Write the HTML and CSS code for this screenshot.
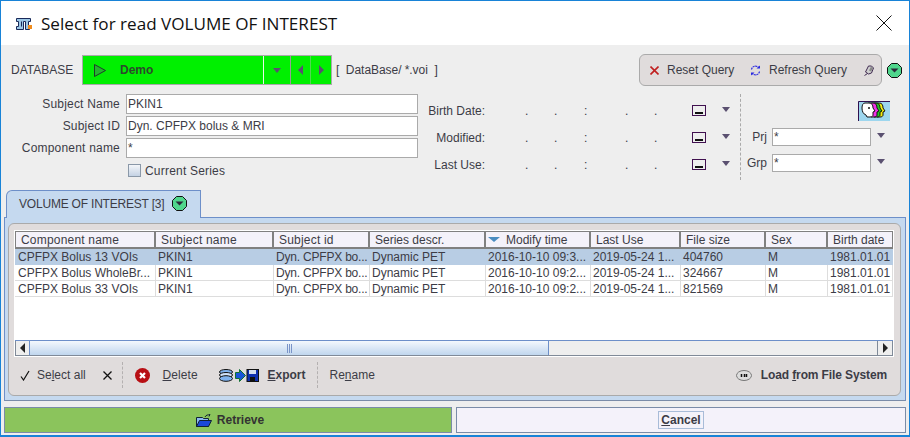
FILE: index.html
```html
<!DOCTYPE html>
<html lang="en">
<head>
<meta charset="utf-8">
<title>Select for read VOLUME OF INTEREST</title>
<link rel="stylesheet" href="styles.css">
</head>
<body>
<div class="window">
  <header class="titlebar">
    <svg class="logo" width="17" height="12" viewBox="0 0 17 12"><path d="M0.500 0.500h14v3h-2v5h1v3h-4v-8h-2v8h-7v-3h2v-5h-2z" fill="#9cc7e6" stroke="#1a2a5a"/><path d="M5.500 3.500v5" stroke="#1a2a5a"/><rect x="12" y="7" width="4" height="4" fill="#f08c1e"/></svg>
    <h1 class="title">Select for read VOLUME OF INTEREST</h1>
    <svg class="close" width="16" height="16" viewBox="0 0 16 16"><path d="M0.500 0.500l15 15M15.500 0.500l-15 15" stroke="#111" fill="none"/></svg>
  </header>

  <section class="dbrow">
    <span class="dblabel">DATABASE</span>
    <div class="dbbar">
      <svg class="play" width="12" height="13" viewBox="0 0 12 13"><path d="M0.500 0.500v12l11-6z" fill="#25b52f" stroke="#1f3d2a"/></svg>
      <b class="dbname">Demo</b>
      <span class="dbdrop"><i class="tri"></i></span>
      <span class="dbnav dbnav-prev"><i class="tri-l"></i></span>
      <span class="dbnav"><i class="tri-r"></i></span>
    </div>
    <span class="dbpath">[&nbsp; DataBase/ *.voi &nbsp;]</span>
    <div class="querypill">
      <svg width="9" height="9" viewBox="0 0 9 9"><path d="M0.500 0.500l8 8M8.500 0.500l-8 8" stroke="#c02020" stroke-width="1.600"/></svg>
      <span class="qreset">Reset Query</span>
      <svg class="qicon2" width="11" height="11" viewBox="0 0 11 11"><path d="M1.500 4.500a4 4 0 0 1 7-2M9.500 6.500a4 4 0 0 1-7 2" fill="none" stroke="#2a2ae0" stroke-width="1.200" stroke-dasharray="2 0.600"/><path d="M6.500 3.500h3.500v-3zM4.500 7.500h-3.500v3z" fill="#2a2ae0"/></svg>
      <span class="qrefresh">Refresh Query</span>
      <svg class="qerase" width="10" height="11" viewBox="0 0 10 11"><path d="M1.500 7l3-6h3l2 2-2 5-3 1z" fill="#cfcfcf" stroke="#402a50"/><path d="M7 1.500l2 2-2 3-2-1z" fill="#888"/><path d="M0.500 10.500l3-2" stroke="#402a50"/></svg>
    </div>
    <svg class="gdot gdot-top" width="15" height="15" viewBox="0 0 15 15"><path d="M4.500 0.500h6l4 4v6l-4 4h-6l-4-4v-6z" fill="#4fd68c" stroke="#111"/><path d="M3.500 5.500h8l-4 4z" fill="#2a2a3a"/></svg>
  </section>

  <section class="form">
    <div class="names">
      <div class="frow"><label class="flabel">Subject Name</label><div class="finput">PKIN1</div></div>
      <div class="frow"><label class="flabel">Subject ID</label><div class="finput">Dyn. CPFPX bolus &amp; MRI</div></div>
      <div class="frow"><label class="flabel">Component name</label><div class="finput">*</div></div>
      <div class="checkrow"><i class="check"></i><span>Current Series</span></div>
    </div>
    <div class="dates">
      <div class="drow"><span class="dlabel">Birth Date:</span><span class="dd d1">.</span><span class="dd d2">.</span><span class="dd d3">:</span><span class="dd d4">.</span><span class="dd d5">.</span><svg class="cal" width="14" height="11" viewBox="0 0 14 11"><rect x="0.500" y="0.500" width="13" height="10" fill="none" stroke="#40104f"/><rect x="3" y="7" width="8" height="2" fill="#111"/></svg><i class="tri tri-date"></i></div>
      <div class="drow"><span class="dlabel">Modified:</span><span class="dd d1">.</span><span class="dd d2">.</span><span class="dd d3">:</span><span class="dd d4">.</span><span class="dd d5">.</span><svg class="cal" width="14" height="11" viewBox="0 0 14 11"><rect x="0.500" y="0.500" width="13" height="10" fill="none" stroke="#40104f"/><rect x="3" y="7" width="8" height="2" fill="#111"/></svg><i class="tri tri-date"></i></div>
      <div class="drow"><span class="dlabel">Last Use:</span><span class="dd d1">.</span><span class="dd d2">.</span><span class="dd d3">:</span><span class="dd d4">.</span><span class="dd d5">.</span><svg class="cal" width="14" height="11" viewBox="0 0 14 11"><rect x="0.500" y="0.500" width="13" height="10" fill="none" stroke="#40104f"/><rect x="3" y="7" width="8" height="2" fill="#111"/></svg><i class="tri tri-date"></i></div>
    </div>
    <div class="side">
      <svg class="faces" width="32" height="20" viewBox="0 0 32 20">
        <defs><path id="face" d="M5 2h4c3 0 4 2 4 5l2 3-2 1v3c0 1-1 2-3 2H7l-1-2c-3-1-4-4-4-7 0-3 1-5 3-5z" stroke="#111"/></defs>
        <rect width="32" height="20" fill="#9dd6ee"/><path d="M0.500 20V0.500H32" fill="none" stroke="#30104f"/>
        <use href="#face" x="12" fill="#f4f010"/><use href="#face" x="9" fill="#22c822"/><use href="#face" x="6" fill="#f030e8"/><use href="#face" x="2" fill="#fff"/>
        <circle cx="11" cy="7" r="1" fill="#111"/>
      </svg>
      <div class="srow"><span class="slabel">Prj</span><div class="finput sinput">*</div><i class="tri tri-side"></i></div>
      <div class="srow srow-grp"><span class="slabel">Grp</span><div class="finput sinput">*</div><i class="tri tri-side"></i></div>
    </div>
  </section>

  <div class="tabstrip">
    <div class="tab"><span class="tabtext">VOLUME OF INTEREST [3]</span>
      <svg class="gdot" width="15" height="15" viewBox="0 0 15 15"><path d="M4.500 0.500h6l4 4v6l-4 4h-6l-4-4v-6z" fill="#4fd68c" stroke="#111"/><path d="M3.500 5.500h8l-4 4z" fill="#2a2a3a"/></svg>
    </div>
  </div>
  <section class="tabpanel">
    <div class="inner">
      <div class="tablewrap">
        <table class="grid">
          <colgroup><col class="c1"><col class="c2"><col class="c3"><col class="c4"><col class="c5"><col class="c6"><col class="c7"><col class="c8"><col class="c9"></colgroup>
          <thead><tr><th>Component name</th><th>Subject name</th><th>Subject id</th><th>Series descr.</th><th class="sorted"><i class="tri-sort"></i>Modify time</th><th>Last Use</th><th>File size</th><th>Sex</th><th>Birth date</th></tr></thead>
          <tbody>
            <tr class="sel"><td>CPFPX Bolus 13 VOIs</td><td>PKIN1</td><td class="tight">Dyn. CPFPX bo...</td><td>Dynamic PET</td><td>2016-10-10 09:3...</td><td>2019-05-24 1...</td><td>404760</td><td>M</td><td>1981.01.01</td></tr>
            <tr><td>CPFPX Bolus WholeBr...</td><td>PKIN1</td><td class="tight">Dyn. CPFPX bo...</td><td>Dynamic PET</td><td>2016-10-10 09:2...</td><td>2019-05-24 1...</td><td>324667</td><td>M</td><td>1981.01.01</td></tr>
            <tr><td>CPFPX Bolus 33 VOIs</td><td>PKIN1</td><td class="tight">Dyn. CPFPX bo...</td><td>Dynamic PET</td><td>2016-10-10 09:2...</td><td>2019-05-24 1...</td><td>821569</td><td>M</td><td>1981.01.01</td></tr>
          </tbody>
        </table>
        <div class="hscroll">
          <span class="sbtn"><i class="tri-l tri-dark"></i></span>
          <div class="thumb"><i class="grip"></i></div>
          <div class="track"></div>
          <span class="sbtn sbtn-r"><i class="tri-r tri-dark"></i></span>
        </div>
      </div>
      <div class="toolbar">
        <svg class="t-check" width="10" height="11" viewBox="0 0 10 11"><path d="M1 6.500l2.500 3.500L9 1" fill="none" stroke="#111" stroke-width="1.200"/></svg>
        <span class="t-select">Se<u>l</u>ect all</span>
        <svg class="t-x" width="9" height="9" viewBox="0 0 9 9"><path d="M0.500 0.500l8 8M8.500 0.500l-8 8" stroke="#111" stroke-width="1.300"/></svg>
        <i class="vsep vsep1"></i>
        <svg class="t-del" width="15" height="15" viewBox="0 0 15 15"><circle cx="7.500" cy="7.500" r="7.500" fill="#b80f14"/><path d="M5 5l5 5M10 5l-5 5" stroke="#fff" stroke-width="2.200"/></svg>
        <span class="t-delete"><u>D</u>elete</span>
        <svg class="t-exp" width="40" height="13" viewBox="0 0 40 13"><ellipse cx="7" cy="3" rx="6.500" ry="2.500" fill="#7fb2ee" stroke="#111"/><ellipse cx="7" cy="6" rx="6.500" ry="2.500" fill="#cfe2fa" stroke="#111"/><ellipse cx="7" cy="9.500" rx="6.500" ry="2.800" fill="#7fb2ee" stroke="#111"/><path d="M16.500 3.500h4v-3l6 6-6 6v-3h-4z" fill="#1a55d8" stroke="#107030"/><rect x="28" y="0.500" width="11.500" height="12" fill="#1030b0" stroke="#111"/><rect x="30" y="1" width="7" height="4" fill="#d8e0f0"/><rect x="31" y="8" width="5" height="4" fill="#111"/></svg>
        <b class="t-export"><u>E</u>xport</b>
        <i class="vsep vsep2"></i>
        <span class="t-rename">Re<u>n</u>ame</span>
        <svg class="t-load" width="16" height="11" viewBox="0 0 16 11"><ellipse cx="8" cy="5.500" rx="7.500" ry="5" fill="#ddd" stroke="#777"/><path d="M5.500 4v3M8.500 4v3M10.500 4v3" stroke="#111" stroke-width="1.500"/></svg>
        <b class="t-loadtext">Load <u>f</u>rom File System</b>
      </div>
    </div>
  </section>

  <footer class="actions">
    <div class="btn-retrieve">
      <svg width="16" height="13" viewBox="0 0 16 13"><path d="M0.500 3.500h6l1 1h5v8h-12z" fill="#8ab8ee" stroke="#123"/><path d="M0.500 12.500l3-6h12l-3 6z" fill="#1a48d8" stroke="#123"/><path d="M9 3c1-2 3-2.500 5-2l-1-0.500M14 0.500l-1 2" fill="none" stroke="#123"/></svg>
      <b>Retrieve</b>
    </div>
    <div class="btn-cancel"><b class="cancel-focus"><u>C</u>ancel</b></div>
  </footer>
</div>
</body>
</html>
```
FILE: styles.css
```css
* { box-sizing: border-box; }
html, body { margin: 0; padding: 0; }
body { width: 910px; height: 437px; overflow: hidden; background: #fff; font-family: "Liberation Sans", Arial, sans-serif; font-size: 12px; color: #3c3c46; }
.window { width: 910px; height: 437px; border: 1px solid #1883d7; border-bottom-width: 2px; background: #eee; display: flex; flex-direction: column; }
svg { display: block; flex: none; }

.titlebar { height: 44px; background: #fff; display: flex; align-items: center; padding: 0 17px 0 15px; flex: none; }
.logo { margin-top: 1px; }
.title { margin: 0 0 0 8px; font: 400 17.100px "Open Sans", sans-serif; color: #111; flex: 1; white-space: nowrap; }
.close { margin-top: -1px; }

.dbrow { height: 32px; margin-top: 9px; padding-left: 10px; display: flex; align-items: center; flex: none; }
.dblabel { width: 71px; }
.dbbar { width: 250px; height: 30px; background: #00f000; border: 1px solid #aaa; display: flex; align-items: center; padding-left: 11px; color: #2c4a2c; }
.dbname { margin-left: 14px; width: 143px; }
.dbdrop { width: 28px; height: 100%; border-left: 1px solid #e8f8e8; border-right: 1px solid #999; display: flex; align-items: center; justify-content: center; }
.dbnav { width: 20px; height: 100%; display: flex; align-items: center; justify-content: center; }
.dbnav-prev { border-right: 1px solid #52d852; }
.tri { display: block; width: 0; height: 0; border: 4.500px solid transparent; border-top: 5px solid #5a5070; border-bottom: 0; flex: none; }
.tri-l { display: block; width: 0; height: 0; border: 5px solid transparent; border-right: 5px solid #5a5070; border-left: 0; }
.tri-r { display: block; width: 0; height: 0; border: 5px solid transparent; border-left: 5px solid #5a5070; border-right: 0; }
.tri-dark { border-right-color: #222; border-left-color: #222; }
.dbpath { margin-left: 4px; width: 303px; letter-spacing: -0.050px; }
.querypill { width: 243px; height: 32px; background: #e0dcdc; border: 1px solid #aaa; border-radius: 6px; display: flex; align-items: center; padding-left: 10px; }
.qreset { margin-left: 8px; width: 83px; }
.qrefresh { margin-left: 8px; width: 91px; }
.qerase { margin-left: 4px; }
.gdot-top { margin-left: 5px; }

.form { height: 96px; margin-top: 8px; display: flex; flex: none; }
.names { width: 417px; }
.frow { display: flex; align-items: center; height: 20px; margin-bottom: 2px; }
.flabel { width: 125px; text-align: right; padding-right: 6px; letter-spacing: 0.200px; }
.finput { background: #fff; border: 1px solid #aaa; height: 20px; line-height: 18px; padding-left: 1px; width: 292px; }
.checkrow { display: flex; align-items: center; margin: 6px 0 0 127px; height: 13px; letter-spacing: 0.200px; }
.check { width: 13px; height: 13px; border: 1px solid #8a98a8; background: linear-gradient(#f4f6f9, #c4d2e4); margin-right: 4px; }

.dates { width: 323px; height: 86px; padding-top: 3px; border-right: 1px dashed #aaa; }
.drow { display: flex; align-items: center; height: 27px; }
.dlabel { width: 67px; text-align: right; }
.dd { display: block; width: 0; }
.d1 { margin-left: 40px; } .d2 { margin-left: 29px; } .d3 { margin-left: 30px; } .d4 { margin-left: 41px; } .d5 { margin-left: 29px; }
.cal { margin-left: 38px; }
.tri-date { margin: -3px 0 0 16px; }

.side { flex: 1; padding-top: 7px; }
.faces { margin-left: 117px; }
.srow { display: flex; align-items: center; height: 18px; margin-top: 7px; }
.srow-grp { margin-top: 8px; }
.slabel { width: 26px; text-align: right; margin-right: 5px; }
.sinput { width: 99px; height: 18px; line-height: 16px; }
.tri-side { margin: -3px 0 0 6px; }

.tabstrip { height: 27px; padding-left: 5px; flex: none; position: relative; z-index: 1; }
.tab { width: 195px; height: 28px; background: #c5d9ef; border: 1px solid #6d8fc9; border-bottom: 0; border-top-left-radius: 6px; display: flex; align-items: center; padding: 0 0 2px 12px; }
.tabtext { letter-spacing: -0.200px; }
.tab .gdot { margin-left: 8px; }

.tabpanel { height: 184px; margin: 0 3px; background: #c5d9ef; border: 1px solid #6d8fc9; border-bottom-color: #7a8ca8; padding: 5px 4px 4px 3px; flex: none; }
.inner { height: 173px; background: #e0dcdc; border: 1px solid #aaa; border-radius: 6px; padding: 6px 6px 0 5px; }
.tablewrap { height: 127px; background: #fff; border: 1px solid #fff; display: flex; flex-direction: column; justify-content: space-between; width: 880px; }
.grid { width: 878px; table-layout: fixed; border-collapse: separate; border-spacing: 0; }
.c1 { width: 141px; } .c2 { width: 118px; } .c3 { width: 96px; } .c4 { width: 116px; } .c5 { width: 105px; } .c6 { width: 90px; } .c7 { width: 85px; } .c8 { width: 62px; } .c9 { width: 65px; }
.grid th { height: 18px; background: #f4f2fa; font-weight: 400; text-align: left; padding: 0 0 0 5px; border-top: 1px solid #808080; border-bottom: 2px solid #808080; border-right: 2px solid #808080; white-space: nowrap; overflow: hidden; }
.grid th:nth-child(-n+3) { letter-spacing: 0.200px; }
.grid td { height: 16px; padding: 0 0 0 2px; border-bottom: 1px solid #ddd; border-right: 1px solid #ddd; white-space: nowrap; overflow: hidden; }
.grid td:first-child { padding-left: 3px; }
.grid th:first-child { border-left: 1px solid #808080; }
.grid th:last-child { border-right: 1px solid #808080; }
.grid .sel td { background: #b8cde4; border-right-color: #b8cde4; border-bottom-color: #b8cde4; }
.grid .tight { letter-spacing: -0.200px; }
.grid .sorted { padding-left: 2px; }
.tri-sort { display: inline-block; width: 0; height: 0; border: 6px solid transparent; border-top: 5px solid #4a8cc0; border-bottom: 0; margin-right: 6px; vertical-align: 2px; }
.hscroll { height: 16px; display: flex; border-top: 1px solid #6d8fc9; border-bottom: 1px solid #808a98; flex: none; }
.sbtn { width: 15px; background: #eee; display: flex; align-items: center; justify-content: center; border-left: 1px solid #808a98; border-right: 1px solid #6d8fc9; flex: none; }
.sbtn-r { border-left: 1px solid #808a98; border-right: 1px solid #808a98; width: 16px; }
.thumb { width: 519px; background: linear-gradient(#f4f8fd, #c0d6ee); border-right: 1px solid #6d8fc9; display: flex; align-items: center; justify-content: center; flex: none; }
.grip { display: block; width: 5px; height: 9px; background: repeating-linear-gradient(90deg, #7a94c8 0 1px, transparent 1px 2px); }
.track { flex: 1; background: #eee; }

.toolbar { height: 36px; display: flex; align-items: center; padding-left: 6px; }
.t-select { margin-left: 7px; width: 65.500px; }
.vsep { display: block; width: 1px; height: 26px; border-left: 1px dashed #b4b0b0; flex: none; }
.vsep1 { margin-left: 10px; }
.t-del { margin-left: 12px; }
.t-delete { margin-left: 13px; width: 56px; letter-spacing: 0.100px; }
.t-export { margin-left: 9px; width: 49px; }
.t-rename { margin-left: 12px; flex: 1; }
.t-load { margin-right: 9px; }
.t-loadtext { margin-right: 7px; letter-spacing: -0.120px; }

.actions { height: 26px; margin: 6px 3px 0 3px; display: flex; gap: 4px; flex: none; }
.btn-retrieve { width: 448px; background: #8bc45c; border: 1px solid #7a8ca8; display: flex; align-items: center; justify-content: center; gap: 5px; padding-left: 4px; color: #333; }
.btn-cancel { flex: 1; background: #f4f2fa; border: 1px solid #7a8ca8; display: flex; align-items: center; justify-content: center; }
.cancel-focus { border: 1px solid #a8bcd8; padding: 1px 2px; font-weight: 700; }
```
